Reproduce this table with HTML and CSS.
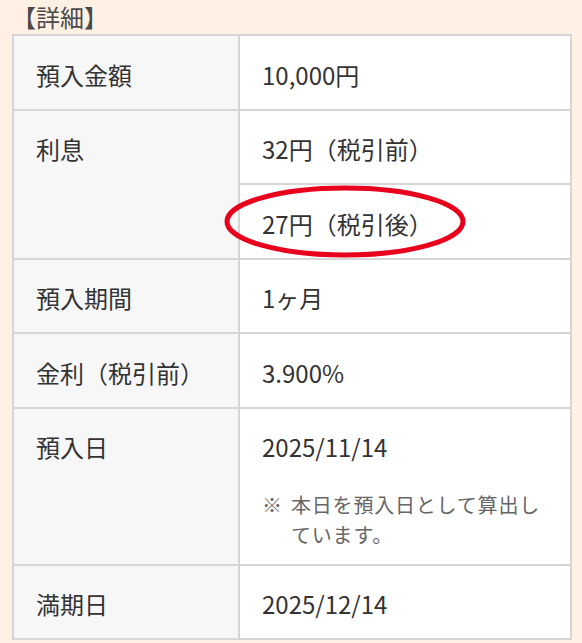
FILE: index.html
```html
<!DOCTYPE html>
<html lang="ja">
<head>
<meta charset="utf-8">
<title>詳細</title>
<link rel="stylesheet" href="styles.css">
</head>
<body>
<div class="page">
  <h2 class="heading">【詳細】</h2>
  <table class="detail">
    <colgroup><col class="col-label"><col></colgroup>
    <tr>
      <th>預入金額</th>
      <td>10,000円</td>
    </tr>
    <tr>
      <th rowspan="2">利息</th>
      <td>32円（税引前）</td>
    </tr>
    <tr>
      <td class="marked">27円（税引後）<svg class="circle" width="242" height="73" viewBox="0 0 242 73"><ellipse cx="121" cy="36.5" rx="118" ry="33.5" fill="none" stroke="#e8001c" stroke-width="5"/></svg></td>
    </tr>
    <tr>
      <th>預入期間</th>
      <td>1ヶ月</td>
    </tr>
    <tr>
      <th>金利（税引前）</th>
      <td>3.900%</td>
    </tr>
    <tr>
      <th>預入日</th>
      <td class="with-note">2025/11/14
        <p class="note"><span class="mark">※</span><span>本日を預入日として算出しています。</span></p>
      </td>
    </tr>
    <tr>
      <th>満期日</th>
      <td>2025/12/14</td>
    </tr>
  </table>
</div>
</body>
</html>
```
FILE: styles.css
```css
html, body {
  margin: 0;
  padding: 0;
  background: #fef1e3;
}
.page {
  padding: 0 10px 0 12px;
  font-family: "Noto Sans CJK JP", "Noto Sans", sans-serif;
  color: #333;
}
.heading {
  margin: 0 0 1px 0;
  padding-top: 1px;
  font-size: 24px;
  font-weight: normal;
  line-height: 32px;
  color: #4a4a4a;
}
.detail {
  width: 560px;
  border-collapse: collapse;
  border: 2px solid #d6d6d6;
  font-size: 24px;
  line-height: 36px;
}
.col-label {
  width: 226px;
}
.detail th,
.detail td {
  border: 2px solid #d6d6d6;
  padding: 20.5px 22px 16px 22px;
  text-align: left;
  vertical-align: top;
  font-weight: normal;
}
.detail th {
  background: #f7f7f7;
}
.detail td {
  background: #fff;
}
.detail td.with-note {
  padding-bottom: 13.5px;
}
.marked {
  position: relative;
}
.circle {
  position: absolute;
  left: -16px;
  top: 0;
}
.note {
  display: flex;
  margin: 25px 0 0 0;
  font-size: 20px;
  line-height: 30px;
  letter-spacing: 0.8px;
  color: #666;
}
.mark {
  flex: 0 0 29px;
}
```
